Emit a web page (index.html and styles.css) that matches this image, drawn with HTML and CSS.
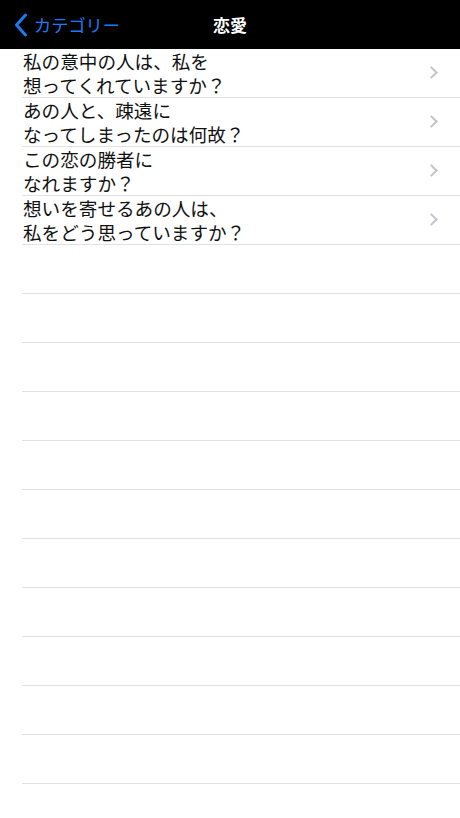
FILE: index.html
```html
<!DOCTYPE html>
<html lang="ja">
<head>
	<meta charset="UTF-8">
	<title>恋愛</title>
	<link rel="stylesheet" href="styles.css">
</head>
<body>

	<!-- Navigation bar -->
	<header class="navbar">
		<a class="back" href="#">
			<svg width="14" height="24" viewBox="0 0 14 24">
				<path d="M11.5 2 L2.5 12 L11.5 22" fill="none" stroke="currentColor" stroke-width="3" stroke-linecap="round" stroke-linejoin="round"/>
			</svg>
			<span>カテゴリー</span>
		</a>
		<h1 class="title">恋愛</h1>
	</header>

	<!-- List -->
	<ul class="list">
		<li class="row"><span class="label">私の意中の人は、私を<br>想ってくれていますか？</span><span class="chevron"></span></li>
		<li class="row"><span class="label">あの人と、疎遠に<br>なってしまったのは何故？</span><span class="chevron"></span></li>
		<li class="row"><span class="label">この恋の勝者に<br>なれますか？</span><span class="chevron"></span></li>
		<li class="row"><span class="label">想いを寄せるあの人は、<br>私をどう思っていますか？</span><span class="chevron"></span></li>
		<li class="row empty"></li>
		<li class="row empty"></li>
		<li class="row empty"></li>
		<li class="row empty"></li>
		<li class="row empty"></li>
		<li class="row empty"></li>
		<li class="row empty"></li>
		<li class="row empty"></li>
		<li class="row empty"></li>
		<li class="row empty"></li>
		<li class="row empty"></li>
	</ul>

</body>
</html>
```

FILE: styles.css
```css
* {
	box-sizing: border-box;
}

html,
body {
	margin: 0;
	padding: 0;
}

body {
	background: #fff;
	font-family: "Noto Sans CJK JP", "Noto Sans", sans-serif;
	width: 460px;
	height: 818px;
	overflow: hidden;
}

.navbar {
	height: 49px;
	background: #000;
	display: flex;
	align-items: center;
	justify-content: center;
	position: relative;
}

.back {
	position: absolute;
	left: 14px;
	top: 13px;
	display: flex;
	align-items: center;
	gap: 6px;
	color: #1a7cf5;
	text-decoration: none;
	font-size: 17.2px;
	line-height: 24px;
}

.back svg {
	display: block;
}

.title {
	margin: 0;
	color: #fff;
	font-size: 17px;
	font-weight: 700;
	line-height: 24px;
}

.list {
	list-style: none;
	margin: 0;
	padding: 0 0 0 22px;
}

.row {
	height: 49px;
	display: flex;
	align-items: center;
	justify-content: space-between;
	border-bottom: 1px solid #e2e2e4;
	padding-right: 24px;
}

.label {
	font-size: 18.6px;
	line-height: 24px;
	color: #111;
	margin-left: 1px;
}

.chevron {
	width: 9px;
	height: 9px;
	border-top: 2px solid #c4c4c8;
	border-right: 2px solid #c4c4c8;
	transform: rotate(45deg);
	margin-top: -1px;
}
```
